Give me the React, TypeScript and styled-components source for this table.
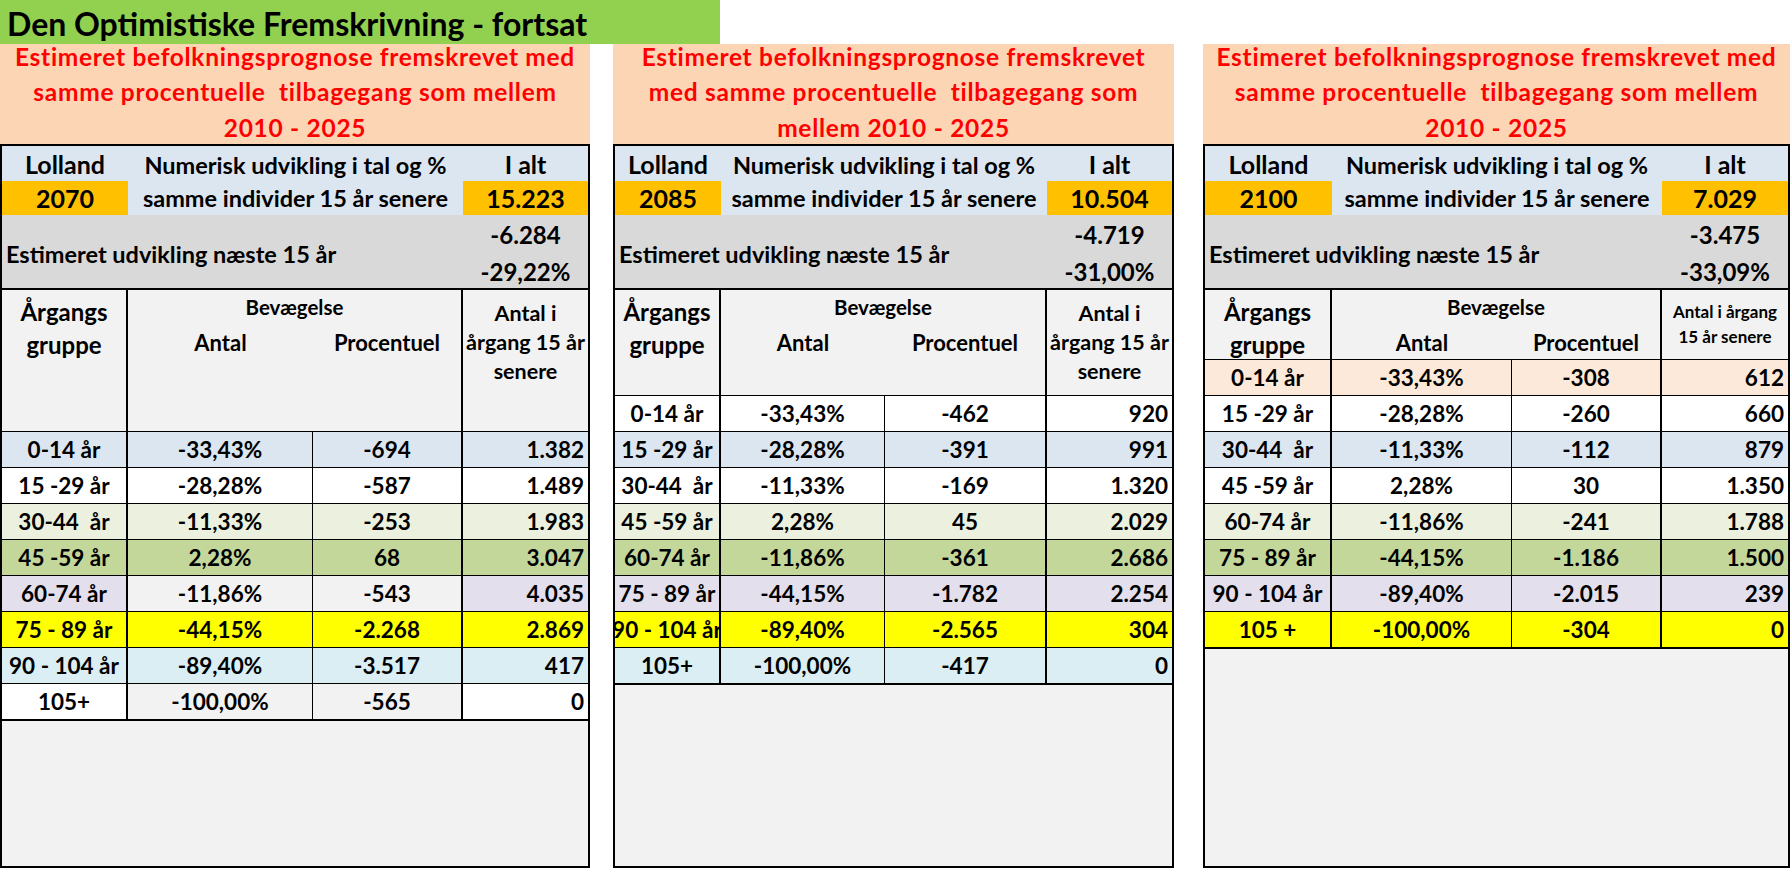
import React from 'react';
import styled, { createGlobalStyle } from 'styled-components';

type Row = {
  label: string;
  pct: string;
  num: string;
  total: string;
  bg: string;
  midBg?: string;
};

type PanelData = {
  width: number;
  gap: number;
  cols: [number, number, number, number];
  headHeight: number;
  intro: string[];
  year: string;
  total: string;
  change: string;
  changePct: string;
  compactHead?: boolean;
  rows: Row[];
};

const C = {
  blue: '#dce6f1',
  white: '#ffffff',
  lime: '#ebf1de',
  olive: '#c4d79b',
  lilac: '#e4dfec',
  yellow: '#ffff00',
  aqua: '#daeef3',
  peach: '#fde9d9',
  grey: '#f2f2f2',
};

const GlobalStyle = createGlobalStyle`
  html, body {
    margin: 0;
    padding: 0;
    background: #ffffff;
  }
  body {
    font-family: Lato, "Noto Sans", "DejaVu Sans", sans-serif;
    color: #000000;
  }
`;

const Sheet = styled.div`
  width: 1791px;
  height: 869px;
  overflow: hidden;
  background: #ffffff;
  display: flex;
  flex-direction: column;
`;

const TitleBar = styled.div`
  width: 720px;
  height: 44px;
  flex: none;
  box-sizing: border-box;
  padding: 4px 0 0 7px;
  background: #92d050;
  font-size: 32px;
  font-weight: 700;
  line-height: 40px;
  white-space: nowrap;
`;

const PanelsRow = styled.div`
  display: flex;
  height: 824px;
  flex: none;
`;

const Panel = styled.section<{ $w: number; $gap: number }>`
  width: ${p => p.$w}px;
  margin-left: ${p => p.$gap}px;
  flex: none;
  display: flex;
  flex-direction: column;
`;

const Intro = styled.div`
  height: 100px;
  flex: none;
  box-sizing: border-box;
  padding-bottom: 4px;
  display: flex;
  flex-direction: column;
  justify-content: center;
  background: #fcd5b4;
  color: #ff0000;
  font-size: 24.5px;
  font-weight: 700;
  letter-spacing: 0.7px;
  line-height: 35.5px;
  text-align: center;
  white-space: pre;
`;

const Frame = styled.div`
  flex: 1;
  min-height: 0;
  border: 2px solid #000000;
  background: ${C.grey};
  display: flex;
  flex-direction: column;
  font-weight: 700;
`;

const InfoGrid = styled.div<{ $cols: string }>`
  display: grid;
  grid-template-columns: ${p => p.$cols};
  grid-template-rows: 35px 34px;
  flex: none;
  background: ${C.blue};
`;

const InfoCell = styled.div<{ $row: number; $col: number; $orange?: boolean }>`
  grid-row: ${p => p.$row};
  grid-column: ${p => p.$col};
  display: flex;
  align-items: center;
  justify-content: center;
  font-size: 25px;
  white-space: nowrap;
  background: ${p => (p.$orange ? '#ffc000' : 'transparent')};
`;

const InfoMiddle = styled.div`
  grid-row: 1 / span 2;
  grid-column: 2;
  padding-top: 3px;
  font-size: 23.5px;
  line-height: 33px;
  text-align: center;
  white-space: nowrap;
`;

const ChangeBlock = styled.div<{ $cols: string }>`
  display: grid;
  grid-template-columns: ${p => p.$cols};
  height: 75px;
  flex: none;
  box-sizing: border-box;
  background: #d9d9d9;
  border-bottom: 2px solid #000000;
`;

const ChangeLabel = styled.div`
  display: flex;
  align-items: center;
  padding: 3px 0 0 4px;
  font-size: 23.5px;
  white-space: nowrap;
`;

const ChangeValues = styled.div`
  padding-top: 2px;
  font-size: 24px;
  line-height: 36.5px;
  text-align: center;
  white-space: nowrap;
`;

const Head = styled.div<{ $cols: string; $h: number }>`
  display: grid;
  grid-template-columns: ${p => p.$cols};
  height: ${p => p.$h}px;
  flex: none;
  box-sizing: border-box;
  border-bottom: 1px solid #000000;
  background: ${C.grey};
`;

const HeadGroupLabel = styled.div`
  border-right: 2px solid #000000;
  padding-top: 5px;
  font-size: 24px;
  line-height: 33px;
  text-align: center;
  white-space: nowrap;
`;

const Movement = styled.div<{ $first: number }>`
  grid-column: 2 / span 2;
  display: grid;
  grid-template-columns: ${p => p.$first}px 1fr;
  grid-template-rows: 32px 36px;
  align-content: start;
  border-right: 2px solid #000000;
  text-align: center;
  white-space: nowrap;
`;

const MovementTitle = styled.div`
  grid-column: 1 / span 2;
  padding-top: 2px;
  font-size: 20.5px;
  line-height: 30px;
`;

const MovementSub = styled.div`
  padding-top: 6px;
  font-size: 22px;
  line-height: 30px;
`;

const LaterHead = styled.div<{ $compact?: boolean }>`
  padding-top: 9px;
  font-size: ${p => (p.$compact ? 17 : 21.5)}px;
  line-height: ${p => (p.$compact ? 25 : 29)}px;
  text-align: center;
  white-space: nowrap;
`;

const DataRow = styled.div<{ $cols: string; $bg: string; $last?: boolean }>`
  display: grid;
  grid-template-columns: ${p => p.$cols};
  height: ${p => (p.$last ? 37 : 36)}px;
  flex: none;
  box-sizing: border-box;
  border-bottom: ${p => (p.$last ? 2 : 1)}px solid #000000;
  background: ${p => p.$bg};
  font-size: 22.5px;
`;

const DataCell = styled.div<{ $line: number; $right?: boolean; $bg?: string }>`
  display: flex;
  align-items: center;
  justify-content: ${p => (p.$right ? 'flex-end' : 'center')};
  padding-right: ${p => (p.$right ? 4 : 0)}px;
  min-width: 0;
  overflow: hidden;
  white-space: pre;
  border-right: ${p => p.$line}px solid #000000;
  background: ${p => p.$bg ?? 'transparent'};
`;

const panels: PanelData[] = [
  {
    width: 590,
    gap: 0,
    cols: [126, 185, 150, 125],
    headHeight: 142,
    intro: [
      'Estimeret befolkningsprognose fremskrevet med',
      'samme procentuelle  tilbagegang som mellem',
      '2010 - 2025',
    ],
    year: '2070',
    total: '15.223',
    change: '-6.284',
    changePct: '-29,22%',
    rows: [
      { label: '0-14 år', pct: '-33,43%', num: '-694', total: '1.382', bg: C.blue },
      { label: '15 -29 år', pct: '-28,28%', num: '-587', total: '1.489', bg: C.white },
      { label: '30-44  år', pct: '-11,33%', num: '-253', total: '1.983', bg: C.lime },
      { label: '45 -59 år', pct: '2,28%', num: '68', total: '3.047', bg: C.olive },
      { label: '60-74 år', pct: '-11,86%', num: '-543', total: '4.035', bg: C.lilac, midBg: C.grey },
      { label: '75 - 89 år', pct: '-44,15%', num: '-2.268', total: '2.869', bg: C.yellow },
      { label: '90 - 104 år', pct: '-89,40%', num: '-3.517', total: '417', bg: C.aqua },
      { label: '105+', pct: '-100,00%', num: '-565', total: '0', bg: C.white, midBg: C.grey },
    ],
  },
  {
    width: 561,
    gap: 23,
    cols: [106, 164, 162, 125],
    headHeight: 106,
    intro: [
      'Estimeret befolkningsprognose fremskrevet',
      'med samme procentuelle  tilbagegang som',
      'mellem 2010 - 2025',
    ],
    year: '2085',
    total: '10.504',
    change: '-4.719',
    changePct: '-31,00%',
    rows: [
      { label: '0-14 år', pct: '-33,43%', num: '-462', total: '920', bg: C.white },
      { label: '15 -29 år', pct: '-28,28%', num: '-391', total: '991', bg: C.blue },
      { label: '30-44  år', pct: '-11,33%', num: '-169', total: '1.320', bg: C.white },
      { label: '45 -59 år', pct: '2,28%', num: '45', total: '2.029', bg: C.lime },
      { label: '60-74 år', pct: '-11,86%', num: '-361', total: '2.686', bg: C.olive },
      { label: '75 - 89 år', pct: '-44,15%', num: '-1.782', total: '2.254', bg: C.lilac },
      { label: '90 - 104 år', pct: '-89,40%', num: '-2.565', total: '304', bg: C.yellow },
      { label: '105+', pct: '-100,00%', num: '-417', total: '0', bg: C.aqua },
    ],
  },
  {
    width: 587,
    gap: 29,
    cols: [127, 180, 150, 126],
    headHeight: 70,
    compactHead: true,
    intro: [
      'Estimeret befolkningsprognose fremskrevet med',
      'samme procentuelle  tilbagegang som mellem',
      '2010 - 2025',
    ],
    year: '2100',
    total: '7.029',
    change: '-3.475',
    changePct: '-33,09%',
    rows: [
      { label: '0-14 år', pct: '-33,43%', num: '-308', total: '612', bg: C.peach },
      { label: '15 -29 år', pct: '-28,28%', num: '-260', total: '660', bg: C.white },
      { label: '30-44  år', pct: '-11,33%', num: '-112', total: '879', bg: C.blue },
      { label: '45 -59 år', pct: '2,28%', num: '30', total: '1.350', bg: C.white },
      { label: '60-74 år', pct: '-11,86%', num: '-241', total: '1.788', bg: C.lime },
      { label: '75 - 89 år', pct: '-44,15%', num: '-1.186', total: '1.500', bg: C.olive },
      { label: '90 - 104 år', pct: '-89,40%', num: '-2.015', total: '239', bg: C.lilac },
      { label: '105 +', pct: '-100,00%', num: '-304', total: '0', bg: C.yellow },
    ],
  },
];

const ForecastPanel: React.FC<{ data: PanelData }> = ({ data }) => {
  const [c1, c2, c3, c4] = data.cols;
  const four = `${c1}px ${c2}px ${c3}px ${c4}px`;
  const three = `${c1}px ${c2 + c3}px ${c4}px`;
  const two = `${c1 + c2 + c3}px ${c4}px`;

  return (
    <Panel $w={data.width} $gap={data.gap}>
      <Intro>
        {data.intro.map(line => (
          <div key={line}>{line}</div>
        ))}
      </Intro>
      <Frame>
        <InfoGrid $cols={three}>
          <InfoCell $row={1} $col={1}>Lolland</InfoCell>
          <InfoMiddle>
            <div>Numerisk udvikling i tal og %</div>
            <div>samme individer 15 år senere</div>
          </InfoMiddle>
          <InfoCell $row={1} $col={3}>I alt</InfoCell>
          <InfoCell $row={2} $col={1} $orange>{data.year}</InfoCell>
          <InfoCell $row={2} $col={3} $orange>{data.total}</InfoCell>
        </InfoGrid>

        <ChangeBlock $cols={two}>
          <ChangeLabel>Estimeret udvikling næste 15 år</ChangeLabel>
          <ChangeValues>
            <div>{data.change}</div>
            <div>{data.changePct}</div>
          </ChangeValues>
        </ChangeBlock>

        <Head $cols={four} $h={data.headHeight}>
          <HeadGroupLabel>
            <div>Årgangs</div>
            <div>gruppe</div>
          </HeadGroupLabel>
          <Movement $first={c2}>
            <MovementTitle>Bevægelse</MovementTitle>
            <MovementSub>Antal</MovementSub>
            <MovementSub>Procentuel</MovementSub>
          </Movement>
          {data.compactHead ? (
            <LaterHead $compact>
              <div>Antal i årgang</div>
              <div>15 år senere</div>
            </LaterHead>
          ) : (
            <LaterHead>
              <div>Antal i</div>
              <div>årgang 15 år</div>
              <div>senere</div>
            </LaterHead>
          )}
        </Head>

        {data.rows.map((r, i) => (
          <DataRow key={r.label} $cols={four} $bg={r.bg} $last={i === data.rows.length - 1}>
            <DataCell $line={2}>{r.label}</DataCell>
            <DataCell $line={1} $bg={r.midBg}>{r.pct}</DataCell>
            <DataCell $line={2} $bg={r.midBg}>{r.num}</DataCell>
            <DataCell $line={0} $right>{r.total}</DataCell>
          </DataRow>
        ))}
      </Frame>
    </Panel>
  );
};

export default function App() {
  return (
    <>
      <GlobalStyle />
      <Sheet>
        <TitleBar>Den Optimistiske Fremskrivning - fortsat</TitleBar>
        <PanelsRow>
          {panels.map(p => (
            <ForecastPanel key={p.year} data={p} />
          ))}
        </PanelsRow>
      </Sheet>
    </>
  );
}
